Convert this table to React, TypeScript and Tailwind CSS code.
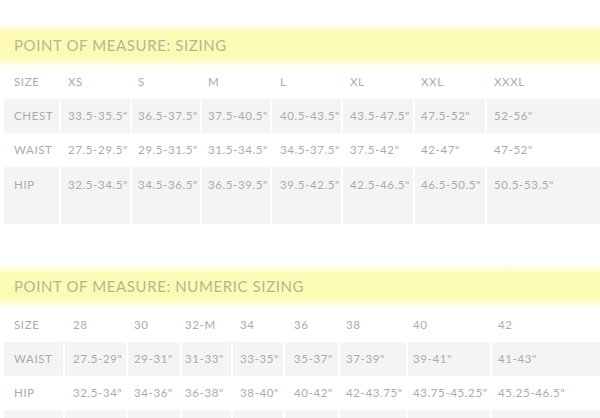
import type { ReactNode } from "react";

// Tabla de medidas: dos bloques con encabezado resaltado en amarillo.
interface Row {
  cells: string[];
  shaded?: boolean;
  tall?: boolean;
}

const sizing: Row[] = [
  { cells: ["SIZE", "XS", "S", "M", "L", "XL", "XXL", "XXXL"] },
  { cells: ["CHEST", "33.5-35.5\"", "36.5-37.5\"", "37.5-40.5\"", "40.5-43.5\"", "43.5-47.5\"", "47.5-52\"", "52-56\""], shaded: true },
  { cells: ["WAIST", "27.5-29.5\"", "29.5-31.5\"", "31.5-34.5\"", "34.5-37.5\"", "37.5-42\"", "42-47\"", "47-52\""] },
  { cells: ["HIP", "32.5-34.5\"", "34.5-36.5\"", "36.5-39.5\"", "39.5-42.5\"", "42.5-46.5\"", "46.5-50.5\"", "50.5-53.5\""], shaded: true, tall: true },
];

const numeric: Row[] = [
  { cells: ["SIZE", "28", "30", "32-M", "34", "36", "38", "40", "42"] },
  { cells: ["WAIST", "27.5-29\"", "29-31\"", "31-33\"", "33-35\"", "35-37\"", "37-39\"", "39-41\"", "41-43\""], shaded: true },
  { cells: ["HIP", "32.5-34\"", "34-36\"", "36-38\"", "38-40\"", "40-42\"", "42-43.75\"", "43.75-45.25\"", "45.25-46.5\""] },
  { cells: ["", "", "", "", "", "", "", "", ""], shaded: true },
];

function Band({ children }: { children: ReactNode }) {
  return (
    <div className="bg-[linear-gradient(to_bottom,rgba(251,251,180,0)_0%,#fbfbb6_22%,#fbfbb6_78%,rgba(251,251,180,0)_100%)] py-[12px] pl-[14px]">
      <h2 className="text-[15px] leading-[20px] tracking-[0.6px] text-[#b7b78d]">{children}</h2>
    </div>
  );
}

function Table({ rows, cols, pads }: { rows: Row[]; cols: string; pads: string[] }) {
  return (
    <div className="ml-[4px] flex flex-col">
      {rows.map((r, i) => (
        <div key={i} className={`grid gap-x-[2px] ${cols}`}>
          {r.cells.map((c, j) => (
            <div
              key={j}
              className={`${r.shaded ? "bg-[#f4f4f4]" : ""} ${pads[j]} ${r.tall ? "h-[57px] pt-[11px]" : "h-[34px] pt-[10px]"} text-[11.5px] leading-[14px] tracking-[0.6px] text-[#ababab]`}
            >
              {c}
            </div>
          ))}
        </div>
      ))}
    </div>
  );
}

export default function App() {
  return (
    <div className="h-[418px] w-[600px] overflow-hidden bg-white font-['Lato',sans-serif]">
      <div className="pt-[23px]">
        <Band>POINT OF MEASURE: SIZING</Band>
      </div>
      <div className="-mt-[2px]">
        <Table
          rows={sizing}
          cols="grid-cols-[55px_69px_68px_68px_69px_70px_70px_1fr]"
          pads={["pl-[10px]", "pl-[7px]", "pl-[6px]", "pl-[6px]", "pl-[8px]", "pl-[7px]", "pl-[6px]", "pl-[7px]"]}
        />
      </div>
      <div className="pt-[40px]">
        <Band>POINT OF MEASURE: NUMERIC SIZING</Band>
      </div>
      <div>
        <Table
          rows={numeric}
          cols="grid-cols-[59px_61px_52px_49px_50px_53px_66px_82px_1fr]"
          pads={["pl-[10px]", "pl-[8px]", "pl-[6px]", "pl-[3px]", "pl-[7px]", "pl-[9px]", "pl-[6px]", "pl-[5px]", "pl-[6px]"]}
        />
      </div>
    </div>
  );
}
